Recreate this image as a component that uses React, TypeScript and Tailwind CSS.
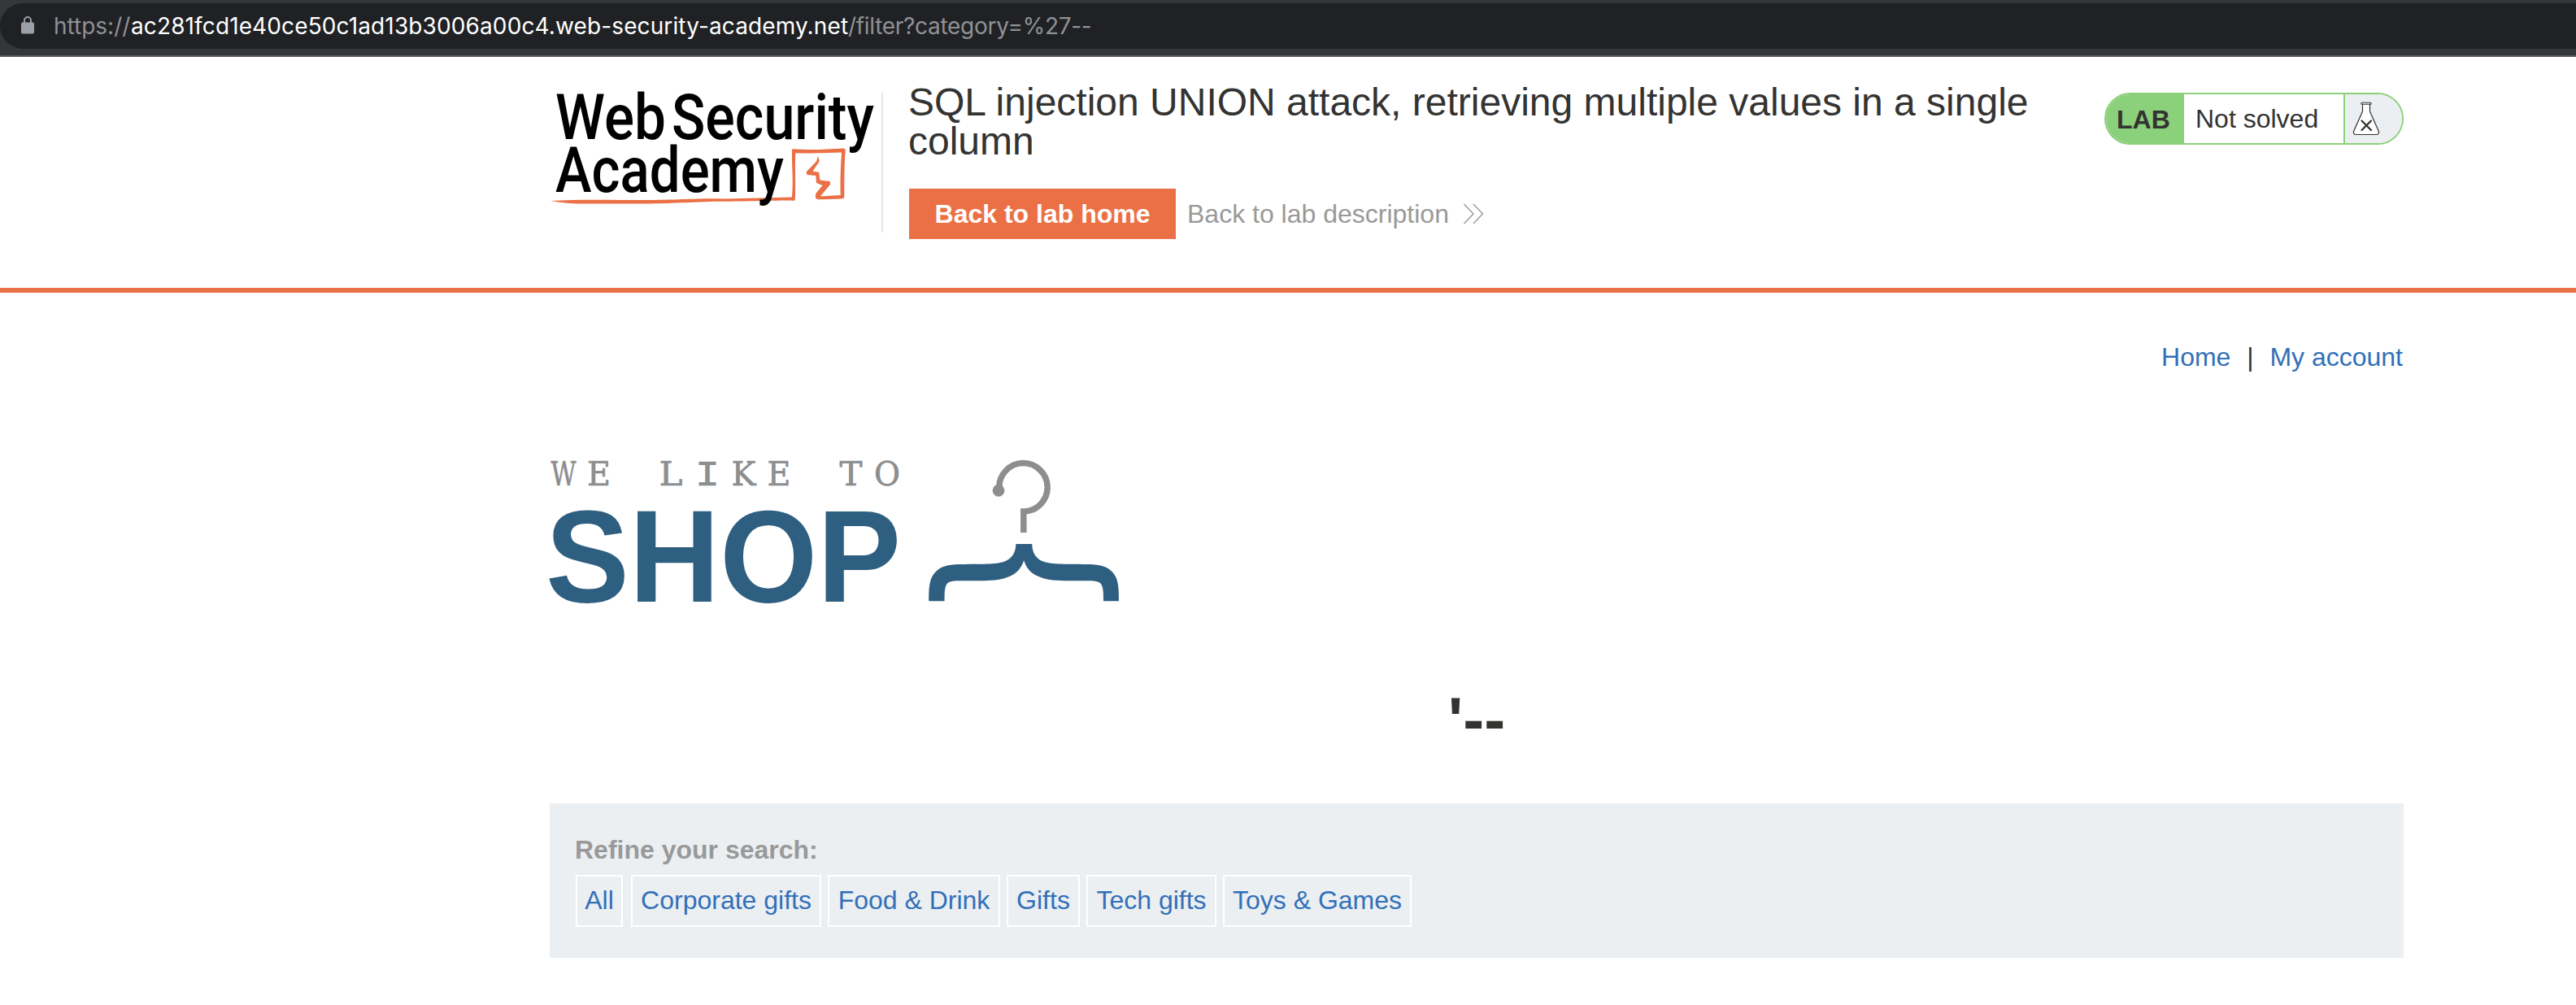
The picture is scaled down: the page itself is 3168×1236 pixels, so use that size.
import React from "react";

function AddressBar() {
  return (
    <div className="h-[70px] w-full overflow-hidden border-b-2 border-[#5b5c60] bg-[#35363a] pt-1">
      <div className="flex h-14 w-[3300px] items-center rounded-full bg-[#202124] pl-[26px]">
        <svg className="-mt-0.5 h-[22px] w-4 shrink-0" viewBox="0 0 16 22">
          <rect x="0" y="7.5" width="16" height="14" rx="2" fill="#9aa0a6" />
          <path d="M4 8.5V5a4 4 0 0 1 8 0v3.500" fill="none" stroke="#9aa0a6" strokeWidth="2" />
        </svg>
        <div className="ml-[24px] flex font-['Inter','Roboto',sans-serif] text-[28px] leading-[56px] whitespace-nowrap text-[#8f9194]">
          <span className="w-[95px]">https://</span>
          <span className="w-[882px] tracking-[0.12px] text-white">
            ac281fcd1e40ce50c1ad13b3006a00c4.web-security-academy.net
          </span>
          <span className="tracking-[-0.3px]">/filter?category=%27--</span>
        </div>
      </div>
    </div>
  );
}

function AcademyLogo() {
  return (
    <svg className="h-[172px] w-[408px] shrink-0 overflow-visible" viewBox="676 114 408 172">
      <path
        d="M974 184.500Q974 183 976 183.300C995 184.800 1015 183.500 1037 182.600Q1040 182.500 1039.700 186C1038 205 1038.500 225 1038.300 242Q1038 244.500 1035 244.500C1025 244.500 1015 245.500 1005 245.300L1002.800 243L1003.300 238L1011.500 228L1004 225L1003.300 216L992.500 215L991.500 211.500L1004 198.500L1006.200 191.700L1007.700 198.500L999.500 210.500L1007.300 212L1008.400 221.500L1020.600 223L1021.300 226.500L1009 241.300C1018 241 1026 240.500 1033.700 240C1033 222 1034 204 1035 187.600C1015 188 995 189 978.300 188.300C977.300 208 978.800 226 977.700 246.500H973.800V243C976 222 973.500 204 974 184.500Z"
        fill="#eb7045"
      />
      <path d="M677 247C710 245 750 246 790 246C840 246 860 243.500 890 244.500L977 242.500V246.500C950 246.500 900 248 880 247.800C840 249 820 250.500 790 250.500H715C700 250.500 690 249 677 247Z" fill="#eb7045" />
      <g className="font-['Roboto',sans-serif] font-medium" fill="#000" fontSize="77">
        <text x="683" y="171" textLength="136" lengthAdjust="spacingAndGlyphs">Web</text>
        <text x="826" y="171" textLength="249" lengthAdjust="spacingAndGlyphs">Security</text>
        <text x="683" y="236" textLength="281" lengthAdjust="spacingAndGlyphs">Academy</text>
      </g>
    </svg>
  );
}

function LabStatus() {
  return (
    <div className="mt-[44px] flex h-16 w-[368px] shrink-0 overflow-hidden rounded-full border-2 border-[#8bd07a] bg-white text-[32px] leading-[60px] text-[#333332]">
      <div className="w-24 bg-[#8bd07a] pt-px pl-[13px] font-bold">LAB</div>
      <div className="w-[196px] pl-[14px]">Not solved</div>
      <div className="flex-1 border-l-2 border-[#8bd07a] bg-[#ebeff2]">
        <svg className="mt-[9px] ml-[9px] h-[42px] w-[34px]" viewBox="0 0 34 42" fill="#fff" stroke="#333332">
          <path d="M12.500 2.500V12L1.600 36.500Q.8 40.500 4.500 40.500H29.500Q33.200 40.500 32.400 36.500L21.500 12V2.500Z" strokeWidth="1.200" />
          <rect x="10.800" y="1.200" width="12.400" height="2" rx="1" strokeWidth="1.100" />
          <path d="M11.500 23.500L23 35M23 23.500L11.500 35" strokeWidth="2.300" strokeLinecap="round" />
        </svg>
      </div>
    </div>
  );
}

function LabHeader() {
  return (
    <header className="h-[290px] border-b-[6px] border-[#eb7045]">
      <div className="ml-[676px] flex w-[2280px]">
        <div className="mt-[44px] h-[172px] w-[410px] shrink-0 border-r-2 border-[#e5e5e5]">
          <AcademyLogo />
        </div>
        <div className="w-[1470px] shrink-0 pt-8 pl-[31px]">
          <h2 className="w-[1400px] text-[48px] leading-[48px] text-[#333332]">
            SQL injection UNION attack, retrieving multiple values in a single column
          </h2>
          <div className="mt-[34px] ml-px flex items-center">
            <a className="flex h-[62px] w-[328px] items-center justify-center bg-[#eb7045] text-[32px] font-bold whitespace-nowrap text-white">
              Back to lab home
            </a>
            <a className="ml-[14px] text-[32px] whitespace-nowrap text-[#999999]">Back to lab description</a>
            <svg className="ml-[17px] h-[26px] w-[26px]" viewBox="0 0 26 26" fill="none" stroke="#999" strokeWidth="1.400">
              <path d="M1.500 1L13 13L1.500 25M13 1L24.500 13L13 25" />
            </svg>
          </div>
        </div>
        <div className="w-[32px] shrink-0" />
        <LabStatus />
      </div>
    </header>
  );
}

const tagline = [
  { ch: "W", x: 677.5, w: 31 },
  { ch: "E", x: 722, w: 29 },
  { ch: "L", x: 810.5, w: 29 },
  { ch: "K", x: 899.5, w: 30 },
  { ch: "E", x: 943.5, w: 29 },
  { ch: "T", x: 1032.5, w: 28 },
  { ch: "O", x: 1075, w: 32 },
];

function ShopLogo() {
  return (
    <svg className="h-[184px] w-[712px] overflow-visible" viewBox="668 562 712 184">
      <g className="font-['DejaVu_Serif',serif]" fill="#8c8e8f" stroke="#8c8e8f" strokeWidth="0.7" fontSize="41">
        {tagline.map((l) => (
          <text key={l.x} x={l.x} y="597" textLength={l.w} lengthAdjust="spacingAndGlyphs">
            {l.ch}
          </text>
        ))}
        <text className="font-['Liberation_Mono',monospace]" x="855" y="597" fontSize="45" textLength="30" lengthAdjust="spacingAndGlyphs">
          I
        </text>
      </g>
      <text className="font-['Liberation_Sans',sans-serif] font-bold" x="671" y="740" fontSize="162" fill="#2f5f80" textLength="437" lengthAdjust="spacingAndGlyphs">
        SHOP
      </text>
      <path d="M1228.800 600A29.700 29.700 0 1 1 1258.800 629V655" fill="none" stroke="#8c8e8f" strokeWidth="7.500" />
      <ellipse cx="1228" cy="603.300" rx="7.400" ry="7.500" fill="#8c8e8f" />
      <path
        d="M1249.400 669H1269.200C1269.500 680 1274 687 1283 690.500C1293 694.500 1315 693.500 1335 694C1352 694 1361 696 1368 703.500C1375 711 1376 720 1376 739.300H1357C1357 728 1357 722 1353.500 717.500C1350 714 1342 714.300 1333 714.300C1313 714.300 1295 714.800 1284 711.500C1270 707.500 1263 701 1259.200 689.300C1255.400 701 1248.400 707.500 1234.400 711.500C1223.400 714.800 1205.400 714.300 1185.400 714.300C1176.400 714.300 1168.400 714 1165 717.500C1161.600 722 1161.600 728 1161.600 739.300H1142.300C1142.300 720 1143.400 711 1150.400 703.500C1157.400 696 1166.400 694 1183.400 694C1203.400 693.500 1225.400 694.500 1235.400 690.500C1244.400 687 1249.100 680 1249.400 669Z"
        fill="#2f5f80"
      />
    </svg>
  );
}

function SearchFilters() {
  const tag = "flex h-16 items-center justify-center border-2 border-white pb-[3px] whitespace-nowrap";
  return (
    <section className="h-[190px] bg-[#ebeff2] px-8 pt-[37px] text-[32px]">
      <div className="-ml-px leading-10 font-bold text-[#999999]">Refine your search:</div>
      <div className="mt-[11px] flex gap-2 leading-10 text-[#3270b8]">
        <a className={`${tag} mr-0.5 w-[58px]`}>All</a>
        <a className={`${tag} w-[234px]`}>Corporate gifts</a>
        <a className={`${tag} w-[212px]`}>Food &amp; Drink</a>
        <a className={`${tag} w-[90px]`}>Gifts</a>
        <a className={`${tag} w-[160px]`}>Tech gifts</a>
        <a className={`${tag} w-[232px]`}>Toys &amp; Games</a>
      </div>
    </section>
  );
}

export default function App() {
  return (
    <div className="h-[1236px] w-[3168px] overflow-hidden bg-white font-['Liberation_Sans',Arial,sans-serif]">
      <AddressBar />
      <LabHeader />
      <main className="ml-[676px] w-[2280px]">
        <nav className="flex h-[202px] justify-end pt-[59px] pr-px text-[32px] leading-10 text-[#3270b8]">
          <a>Home</a>
          <span className="w-[48px] text-center text-[#333332]">|</span>
          <a>My account</a>
        </nav>
        <div className="-ml-2 h-[184px]">
          <ShopLogo />
        </div>
        <h1 className="h-[242px] pt-[99px] text-center text-[78px] leading-[80px] font-bold text-[#333332]">'--</h1>
        <SearchFilters />
      </main>
    </div>
  );
}
